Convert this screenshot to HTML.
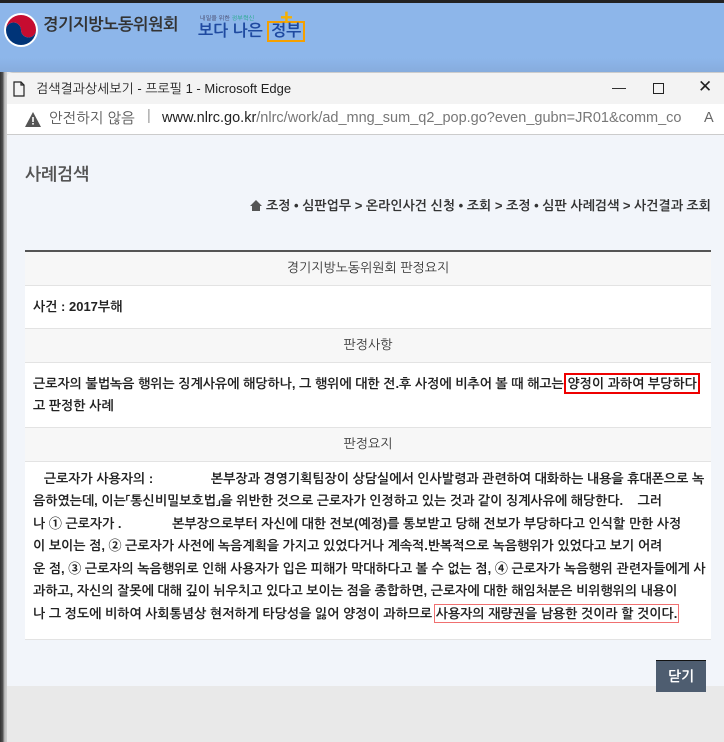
<!DOCTYPE html>
<html><head><meta charset="utf-8"><style>
*{margin:0;padding:0;box-sizing:border-box}
body{width:724px;height:742px;overflow:hidden;position:relative;background:#e9e9e9;font-family:"Liberation Sans","NanumGothic","Noto Sans CJK KR",sans-serif;}
.top{position:absolute;left:0;top:0;width:724px;height:72px;background:linear-gradient(#8db6ea 0,#8db6ea 55px,#86abdc 70px);border-top:3px solid #222}
.left{position:absolute;left:0;top:72px;width:7px;height:670px;background:linear-gradient(90deg,#333 0,#555 3px,#aaa 4px,#ccc 6px)}
.win{position:absolute;left:7px;top:72px;width:717px;height:670px;background:#e9e9e9;border-top-left-radius:6px;overflow:hidden}
.title{height:32px;background:#f3f3f3;font-size:13px;color:#222;padding:8px 0 0 29px;position:relative;border-top:1px solid #ccc}
.addr{height:31px;background:#fff;position:relative;font-size:14.5px;border-bottom:1px solid #ccc}
.content{position:absolute;left:0;top:63px;width:717px;height:551px;background:#f2f5fa}
.grey{color:#777}
table{position:absolute;left:18px;top:115px;width:686px;table-layout:fixed;border-collapse:collapse;background:#fff;font-size:13px;color:#222}
td{border-bottom:1px solid #e3e3e3;padding:0 8px;white-space:nowrap}
.h{background:#f7f7f7;text-align:center;height:34px;font-size:13px;color:#333}
.b{font-weight:bold}
.box{outline:2px solid #e00;outline-offset:1px}
.box2{outline:1.5px solid #f07070;outline-offset:1px}
</style></head><body>
<div class="top">
 <svg style="position:absolute;left:3px;top:9px" width="36" height="36" viewBox="0 0 36 36"><circle cx="18" cy="18" r="17" fill="#fff"/><path d="M3 18a15 15 0 0 1 30 0a7.5 7.5 0 0 1-15 0a7.5 7.5 0 0 0-15 0z" fill="#c60c30"/><path d="M3 18a15 15 0 0 0 30 0a7.5 7.5 0 0 1-15 0a7.5 7.5 0 0 0-15 0z" fill="#003478"/></svg>
 <div style="position:absolute;left:43px;top:13px;font-size:16.5px;font-weight:bold;color:#333;letter-spacing:-0.5px">경기지방노동위원회</div>
 <div style="position:absolute;left:200px;top:11px;font-size:6px;color:#446">내일을 위한 <span style="color:#2a8">정부혁신</span></div>
 <div style="position:absolute;left:198px;top:20px;font-size:16px;font-weight:bold;color:#1f4aa0;white-space:nowrap">보다 나은 <span style="border:2px solid #f5a000;padding:0 2px">정부</span></div>
 <div style="position:absolute;left:280px;top:2px;font-size:22px;font-weight:bold;color:#f5b000">+</div>
</div>
<div class="left"></div>
<div class="win">
 <div class="title">
  <svg style="position:absolute;left:6px;top:8px" width="12" height="16" viewBox="0 0 12 16"><path d="M1 1h7l3 3v11H1z M8 1v3h3" fill="none" stroke="#222" stroke-width="1.2"/></svg>
  검색결과상세보기 - 프로필 1 - Microsoft Edge
  <span style="position:absolute;left:605px;top:6px;font-size:14px">—</span>
  <span style="position:absolute;left:646px;top:10px;width:11px;height:11px;border:1.3px solid #222"></span>
  <span style="position:absolute;left:691px;top:4px;font-size:17px">✕</span>
 </div>
 <div class="addr">
  <svg style="position:absolute;left:18px;top:8px" width="16" height="15" viewBox="0 0 16 15"><path d="M8 0L16 15H0z" fill="#555"/><rect x="7.2" y="5" width="1.6" height="5" fill="#fff"/><rect x="7.2" y="11" width="1.6" height="1.6" fill="#fff"/></svg>
  <span style="position:absolute;left:42px;top:6px;color:#555">안전하지 않음</span>
  <span style="position:absolute;left:140px;top:4px;color:#999">|</span>
  <span style="position:absolute;left:155px;top:6px;color:#222;white-space:nowrap;width:520px;overflow:hidden;display:block">www.nlrc.go.kr<span class="grey">/nlrc/work/ad_mng_sum_q2_pop.go?even_gubn=JR01&amp;comm_code...</span></span>
  <span style="position:absolute;left:697px;top:6px;color:#666">A</span>
 </div>
 <div class="content">
  <div style="position:absolute;left:18px;top:30px;font-size:17px;font-weight:bold;color:#555">사례검색</div>
  <div style="position:absolute;right:13px;top:63px;font-size:13px;font-weight:bold;color:#333;white-space:nowrap"><svg width="12" height="11" viewBox="0 0 12 11" style="vertical-align:-1px"><path d="M6 0L12 6H10V11H2V6H0z" fill="#555"/></svg> 조정 • 심판업무 &gt; 온라인사건 신청 • 조회 &gt; 조정 • 심판 사례검색 &gt; 사건결과 조회</div>
  <table>
   <tr><td class="h" style="border-top:2px solid #555">경기지방노동위원회 판정요지</td></tr>
   <tr><td class="b" style="height:43px">사건 : 2017부해</td></tr>
   <tr><td class="h">판정사항</td></tr>
   <tr><td class="b" style="height:65px;line-height:22px">근로자의 불법녹음 행위는 징계사유에 해당하나, 그 행위에 대한 전.후 사정에 비추어 볼 때 해고는 <span class="box">양정이 과하여 부당하다</span><br>고 판정한 사례</td></tr>
   <tr><td class="h">판정요지</td></tr>
   <tr><td class="b" style="height:177px;line-height:22.5px;padding-top:6px;padding-bottom:14px">&nbsp;&nbsp;&nbsp;근로자가 사용자의 :&nbsp;&nbsp;&nbsp;&nbsp;&nbsp;&nbsp;&nbsp;&nbsp;&nbsp;&nbsp;&nbsp;&nbsp;&nbsp;&nbsp;&nbsp;&nbsp;본부장과 경영기획팀장이 상담실에서 인사발령과 관련하여 대화하는 내용을 휴대폰으로 녹<br>음하였는데, 이는「통신비밀보호법」을 위반한 것으로 근로자가 인정하고 있는 것과 같이 징계사유에 해당한다.&nbsp;&nbsp;&nbsp;&nbsp;그러<br>나 ① 근로자가 .&nbsp;&nbsp;&nbsp;&nbsp;&nbsp;&nbsp;&nbsp;&nbsp;&nbsp;&nbsp;&nbsp;&nbsp;&nbsp;&nbsp;본부장으로부터 자신에 대한 전보(예정)를 통보받고 당해 전보가 부당하다고 인식할 만한 사정<br>이 보이는 점, ② 근로자가 사전에 녹음계획을 가지고 있었다거나 계속적.반복적으로 녹음행위가 있었다고 보기 어려<br>운 점, ③ 근로자의 녹음행위로 인해 사용자가 입은 피해가 막대하다고 볼 수 없는 점, ④ 근로자가 녹음행위 관련자들에게 사<br>과하고, 자신의 잘못에 대해 깊이 뉘우치고 있다고 보이는 점을 종합하면, 근로자에 대한 해임처분은 비위행위의 내용이<br>나 그 정도에 비하여 사회통념상 현저하게 타당성을 잃어 양정이 과하므로 <span class="box2">사용자의 재량권을 남용한 것이라 할 것이다.</span></td></tr>
  </table>
  <div style="position:absolute;left:649px;top:525px;width:50px;height:32px;background:#4e5d70;border-top:1px solid #111;color:#fff;font-size:14px;font-weight:bold;text-align:center;line-height:31px">닫기</div>
 </div>
</div>
</body></html>
